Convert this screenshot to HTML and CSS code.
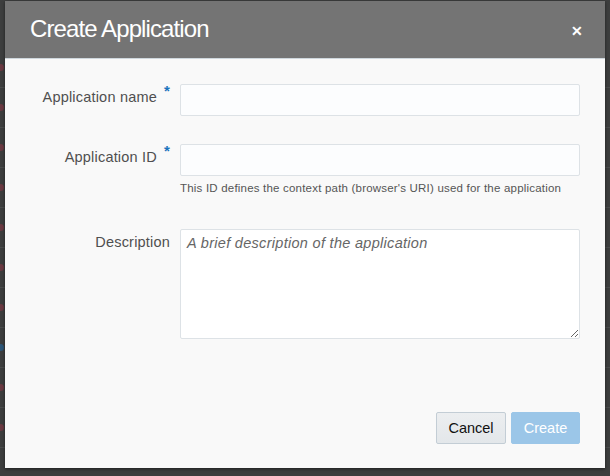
FILE: index.html
```html
<!DOCTYPE html>
<html>
<head>
<meta charset="utf-8">
<link rel="stylesheet" href="styles.css">
</head>
<body>
<div class="backdrop">
  <div class="bg-row"><span class="dot"></span></div>
  <div class="bg-row"><span class="dot"></span></div>
  <div class="bg-row"><span class="dot"></span></div>
  <div class="bg-row"><span class="dot"></span></div>
  <div class="bg-row"><span class="dot"></span></div>
  <div class="bg-row"><span class="dot"></span></div>
  <div class="bg-row"><span class="dot"></span></div>
  <div class="bg-row"><span class="dot blue"></span></div>
  <div class="bg-row"><span class="dot"></span></div>
  <div class="bg-row"><span class="dot"></span></div>
</div>
<div class="dialog">
  <div class="dialog-header">
    <h1 class="dialog-title">Create Application</h1>
    <span class="close">&#x2715;</span>
  </div>
  <div class="dialog-body">
    <div class="form-row">
      <label class="form-label">Application name<span class="req">*</span></label>
      <div class="form-field"><input class="text-input" type="text"></div>
    </div>
    <div class="form-row row-id">
      <label class="form-label">Application ID<span class="req">*</span></label>
      <div class="form-field">
        <input class="text-input" type="text">
        <div class="help">This ID defines the context path (browser's URI) used for the application</div>
      </div>
    </div>
    <div class="form-row row-desc">
      <label class="form-label">Description</label>
      <div class="form-field"><textarea class="text-area" placeholder="A brief description of the application"></textarea></div>
    </div>
  </div>
  <div class="dialog-footer">
    <button class="btn btn-cancel">Cancel</button>
    <button class="btn btn-create">Create</button>
  </div>
</div>
</body>
</html>
```
FILE: styles.css
```css
html, body {
  margin: 0;
  padding: 0;
  width: 610px;
  height: 476px;
  overflow: hidden;
  background: #3d3e3e;
  font-family: "Liberation Sans", Arial, sans-serif;
}
.backdrop {
  display: flex;
  flex-direction: column;
  padding-top: 48px;
}
.bg-row {
  height: 39px;
  border-bottom: 1px solid #4a4c4c;
  display: flex;
  align-items: center;
}
.dot {
  width: 7px;
  height: 7px;
  border-radius: 50%;
  background: #6a3a42;
  margin-left: -3px;
}
.dot.blue { background: #2d5677; }
.dialog {
  position: absolute;
  left: 5px;
  top: 1px;
  width: 600px;
  height: 467px;
  background: #f9f9f9;
  box-shadow: 0 1px 3px rgba(0,0,0,0.5);
  display: flex;
  flex-direction: column;
}
.dialog-header {
  height: 57px;
  background: #747474;
  border-bottom: 1px solid #cfd7dd;
  display: flex;
  align-items: center;
  justify-content: space-between;
  padding: 0 22px 0 25px;
}
.dialog-title {
  margin: 0;
  color: #fff;
  font-weight: normal;
  font-size: 24px;
  letter-spacing: -0.9px;
  padding-bottom: 2px;
}
.close {
  color: #fff;
  font-size: 14px;
  font-weight: bold;
  padding-top: 2px;
}
.dialog-body {
  flex: 1;
  padding: 25px 25px 0 0;
  display: flex;
  flex-direction: column;
}
.form-row {
  display: grid;
  grid-template-columns: 165px 400px;
  column-gap: 10px;
}
.row-id { margin-top: 28px; }
.row-desc { margin-top: 34px; }
.form-label {
  color: #4f4f4f;
  font-size: 14.5px;
  letter-spacing: 0.2px;
  text-align: right;
  line-height: 20px;
  padding-top: 3px;
  white-space: nowrap;
}
.req {
  color: #1c74bd;
  font-size: 15px;
  font-weight: bold;
  margin-left: 7px;
  position: relative;
  top: -6px;
}
.form-field {
  display: flex;
  flex-direction: column;
}
.text-input {
  box-sizing: border-box;
  height: 32px;
  width: 400px;
  margin: 0;
  border: 1px solid #dde2e6;
  border-radius: 2px;
  background: #fcfdfe;
}
.help {
  margin-top: 5px;
  font-size: 11.5px;
  letter-spacing: 0.2px;
  color: #555;
  line-height: 14px;
  white-space: nowrap;
}
.text-area {
  box-sizing: border-box;
  width: 400px;
  height: 110px;
  margin: 0;
  border: 1px solid #dde2e6;
  border-radius: 2px;
  background: #fff;
  padding: 3px 6px;
  font-family: "Liberation Sans", Arial, sans-serif;
  font-size: 14.5px;
  letter-spacing: 0.3px;
  line-height: 20px;
  resize: vertical;
}
.text-area::placeholder {
  color: #666;
  font-style: italic;
  opacity: 1;
}
.dialog-footer {
  display: flex;
  justify-content: flex-end;
  gap: 5px;
  padding: 0 25px 24px 0;
}
.btn {
  box-sizing: border-box;
  height: 32px;
  border-radius: 2px;
  font-family: "Liberation Sans", Arial, sans-serif;
  font-size: 14.5px;
  margin: 0;
}
.btn-cancel {
  width: 70px;
  background: linear-gradient(#eceef0, #e3e7ea);
  border: 1px solid #c3cdd5;
  color: #111;
}
.btn-create {
  width: 69px;
  background: #9bc6e8;
  border: 1px solid #9bc6e8;
  color: #fff;
}
```
